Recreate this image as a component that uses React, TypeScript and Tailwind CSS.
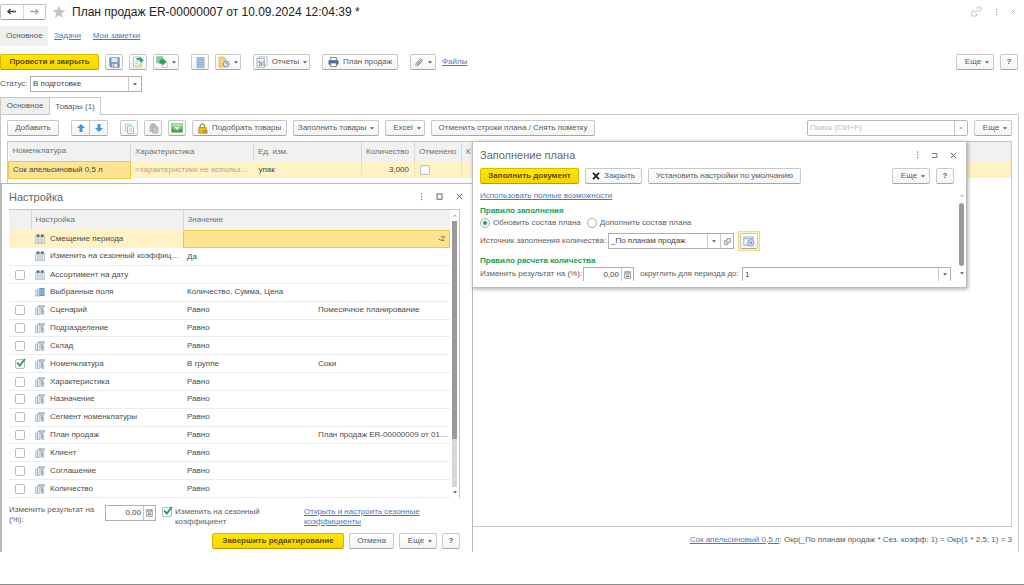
import React from "react";

const btn =
  "flex h-4 shrink-0 items-center justify-center gap-1 whitespace-nowrap rounded-[2px] border border-[#c8c8c8] border-b-[#a6a6a6] bg-linear-to-b from-white to-[#f4f4f4] text-[#5a5a5a]";
const primary =
  "flex h-4 shrink-0 items-center justify-center whitespace-nowrap rounded-[2px] border border-[#d9b800] border-b-[#b89c00] bg-linear-to-b from-[#ffe600] to-[#f7d400] font-bold text-[#5a4d10]";
const link = "text-[#4a78c8] underline";

function Caret() {
  return (
    <svg viewBox="0 0 4 3" className="h-[3px] w-1 shrink-0" aria-hidden="true">
      <path d="M0 0.3h4L2 2.6z" fill="#555" />
    </svg>
  );
}

function CaretUp() {
  return (
    <svg viewBox="0 0 4 3" className="h-[3px] w-1 shrink-0" aria-hidden="true">
      <path d="M0 2.6h4L2 0.3z" fill="#b5b5b5" />
    </svg>
  );
}

function Arrow({ right = false }: { right?: boolean }) {
  return (
    <svg viewBox="0 0 9 7" className="h-[7px] w-[9px]" aria-hidden="true">
      {right ? (
        <path d="M0 3.5h8M5.5 1L8 3.5 5.5 6" fill="none" stroke="#a8a8a8" strokeWidth="1.3" />
      ) : (
        <path d="M9 3.5H1M3.5 1L1 3.5 3.5 6" fill="none" stroke="#444" strokeWidth="1.5" />
      )}
    </svg>
  );
}

function Star() {
  return (
    <svg viewBox="0 0 14 14" className="size-3.5 shrink-0" aria-hidden="true">
      <path d="M7 .5l1.7 4.4 4.8.3-3.7 3 1.2 4.7L7 10.3l-4 2.6 1.2-4.7-3.7-3 4.8-.3z" fill="#c4c4c4" />
    </svg>
  );
}

function SaveIcon() {
  return (
    <svg viewBox="0 0 11 11" className="size-[11px]" aria-hidden="true">
      <path d="M.8.8h9.4v9.4H2L.8 9z" fill="#7e9fc6" stroke="#5f84b0" strokeWidth=".8" />
      <rect x="2.5" y="1" width="6" height="4" fill="#dce8f5" />
      <rect x="3" y="7" width="5.2" height="3" fill="#e9eff6" />
      <rect x="3.8" y="7.6" width="1.4" height="2" fill="#4f77a8" />
    </svg>
  );
}

function PostIcon() {
  return (
    <svg viewBox="0 0 12 12" className="size-3" aria-hidden="true">
      <path d="M1.5 1h5.500l2 2v8h-7.500z" fill="#fff" stroke="#9cb0c4" strokeWidth=".8" />
      <path d="M3 5.500h3M3 7.500h3M3 9.300h3" stroke="#a9bfd4" strokeWidth=".8" />
      <path d="M4.500 2h3V.3L11.700 4 9.800 6.200 7.500 5.700V4.200h-3z" fill="#27b05e" />
      <path d="M6.500 7.500h3.500v3.500H6.500z" fill="#efd76a" />
    </svg>
  );
}

function BasedOnIcon() {
  return (
    <svg viewBox="0 0 12 12" className="size-3" aria-hidden="true">
      <path d="M.8.8h6v6h-6z" fill="#8fd0a5" stroke="#6bb683" strokeWidth=".7" />
      <path d="M6 6h5v5.500H6z" fill="#fff" stroke="#9fb3c4" strokeWidth=".7" />
      <path d="M3.500 3.500h3V2l4 3.800-4 4.200V7.700h-3z" fill="#22a956" />
    </svg>
  );
}

function RegisterIcon() {
  return (
    <svg viewBox="0 0 9 11" className="h-[11px] w-[9px]" aria-hidden="true">
      <rect x="1" y=".5" width="7" height="10" fill="#a8c4e0" stroke="#8fadcb" strokeWidth=".8" />
      <path d="M1 3h7M1 5.500h7M1 8h7" stroke="#7fa2c6" strokeWidth=".6" />
    </svg>
  );
}

function TaskIcon() {
  return (
    <svg viewBox="0 0 12 12" className="size-3" aria-hidden="true">
      <path d="M1 1h5l2 2v8H1z" fill="#f4d27a" stroke="#d9b35a" strokeWidth=".8" />
      <circle cx="8.200" cy="8" r="2.900" fill="#e6eef7" stroke="#6688ad" strokeWidth=".9" />
      <path d="M8.200 6.300V8h1.500" fill="none" stroke="#44648a" strokeWidth=".8" />
    </svg>
  );
}

function ReportIcon() {
  return (
    <svg viewBox="0 0 12 12" className="size-3" aria-hidden="true">
      <path d="M3 .8h8v8.500H3z" fill="#fff" stroke="#9fb0c0" strokeWidth=".8" />
      <path d="M1 2.500h7.500v8.700H1z" fill="#f6f9fb" stroke="#8ea3b5" strokeWidth=".8" />
      <path d="M2.500 5l2 2" stroke="#d9604f" strokeWidth="1.200" />
      <path d="M3.500 10V7.500M5.200 10V6" stroke="#4fae6b" strokeWidth="1.100" />
      <path d="M7 10V4.500" stroke="#8aa8c8" strokeWidth="1" />
    </svg>
  );
}

function PrintIcon() {
  return (
    <svg viewBox="0 0 11 10" className="h-2.5 w-[11px]" aria-hidden="true">
      <rect x="2.700" y=".5" width="5.600" height="3.500" fill="#fff" stroke="#56748f" strokeWidth=".8" />
      <rect x=".5" y="3.300" width="10" height="4.400" rx="1" fill="#4a6f94" />
      <rect x="2.700" y="6" width="5.600" height="3.500" fill="#fff" stroke="#56748f" strokeWidth=".8" />
    </svg>
  );
}

function ClipIcon() {
  return (
    <svg viewBox="0 0 10 10" className="size-2.5" aria-hidden="true">
      <path
        d="M2.200 6.300L6 2.200c1-1.100 2.600.2 1.700 1.400L4.500 7.300c-.6.6-1.400 0-.9-.7L6.200 3.700M2.200 6.300c-1.300 1.600.7 3.200 2.100 1.900L8.500 3.700"
        fill="none"
        stroke="#777"
        strokeWidth=".9"
      />
    </svg>
  );
}

function BlueArrow({ down = false }: { down?: boolean }) {
  return (
    <svg viewBox="0 0 8 8" className="size-2" aria-hidden="true">
      <path d={down ? "M4 8L0 4h2.500V0h3v4H8z" : "M4 0l4 4H5.500v4h-3V4H0z"} fill="#3a9ad9" />
    </svg>
  );
}

function CopyIcon() {
  return (
    <svg viewBox="0 0 11 11" className="size-[11px]" aria-hidden="true">
      <path d="M1.500 1h4.500l1.500 1.500V8h-6z" fill="#eef6fb" stroke="#9cc3d8" strokeWidth=".8" />
      <path d="M3.500 3h4.500l1.500 1.500v6h-6z" fill="#eef6fb" stroke="#8ab8d2" strokeWidth=".8" />
      <path d="M5 6h3M5 8h3" stroke="#9cc3d8" strokeWidth=".7" />
    </svg>
  );
}

function PasteIcon() {
  return (
    <svg viewBox="0 0 11 11" className="size-[11px]" aria-hidden="true">
      <path d="M1.500 1.500h7v7.500h-7z" fill="#bcbcbc" />
      <path d="M3.500.6h3v1.600h-3z" fill="#9a9a9a" />
      <path d="M4.500 4h5.500v6H4.500z" fill="#c6c6c6" stroke="#a4a4a4" strokeWidth=".7" />
    </svg>
  );
}

function ImageIcon() {
  return (
    <svg viewBox="0 0 12 10" className="h-2.5 w-3" aria-hidden="true">
      <rect x=".5" y=".8" width="11" height="8.400" fill="#7cc47a" stroke="#7fbd80" strokeWidth=".8" />
      <rect x="1" y="1.300" width="10" height="2" fill="#bfe0bb" />
      <path d="M1 9V5l3 2.500h4L11 5v4z" fill="#3f9c50" />
      <path d="M3.500 4h5L6 7z" fill="#fff" />
    </svg>
  );
}

function PickIcon() {
  return (
    <svg viewBox="0 0 10 11" className="h-[11px] w-2.5" aria-hidden="true">
      <path d="M2.200 5V2.800C2.200.3 6.500.3 6.500 2.800V5" fill="none" stroke="#8aa33a" strokeWidth="1.300" />
      <path d="M.7 4.500h7.600v5.700H.7z" fill="#e8b820" stroke="#b98b12" strokeWidth=".7" />
      <path d="M5 7h4.500v3.500H5z" fill="#c8922a" />
    </svg>
  );
}

function LinkIcon() {
  return (
    <svg viewBox="0 0 11 11" className="size-[11px]" aria-hidden="true">
      <path
        d="M4.200 5H1.500a.8.800 0 00-.8.800v3.400c0 .5.300.8.800.8h3.400c.5 0 .8-.3.800-.8V7.500M6 3V1.800c0-.4.300-.8.800-.8h2.400c.5 0 .8.300.8.800v2.400c0 .5-.3.800-.8.800H8M4 7l3.500-3.500"
        fill="none"
        stroke="#a0a0a0"
        strokeWidth=".9"
      />
    </svg>
  );
}

function Dots() {
  return (
    <svg viewBox="0 0 3 8" className="h-2 w-[3px]" aria-hidden="true">
      <path d="M1 .5h1.200v1.200H1zM1 3.300h1.200v1.200H1zM1 6.100h1.200v1.200H1z" fill="#777" />
    </svg>
  );
}

function Square() {
  return (
    <svg viewBox="0 0 7 7" className="size-[7px]" aria-hidden="true">
      <rect x="1" y="1" width="5" height="5.200" fill="none" stroke="#666" strokeWidth="1" />
    </svg>
  );
}

function OpenSquare() {
  return (
    <svg viewBox="0 0 7 7" className="size-[7px]" aria-hidden="true">
      <path d="M1 1.500h5v4H1" fill="none" stroke="#777" strokeWidth="1" />
    </svg>
  );
}

function Cross({ className = "size-[7px] text-[#666]" }: { className?: string }) {
  return (
    <svg viewBox="0 0 7 7" className={className} aria-hidden="true">
      <path d="M.8.8l5.400 5.400M6.200.8L.8 6.200" stroke="currentColor" strokeWidth="1" />
    </svg>
  );
}

function CalcIcon() {
  return (
    <svg viewBox="0 0 7 8" className="h-2 w-[7px]" aria-hidden="true">
      <rect x=".8" y=".8" width="5.400" height="6.400" fill="#fff" stroke="#888" strokeWidth=".9" />
      <path d="M1 2h5M2 4h3M2 5.500h3" stroke="#777" strokeWidth=".9" />
    </svg>
  );
}

function ExternalIcon() {
  return (
    <svg viewBox="0 0 7 7" className="size-[7px]" aria-hidden="true">
      <path d="M2.800.8h3.500v3.500H2.800zM4 5.200v1.100H.7V2.700h1.200" fill="none" stroke="#777" strokeWidth=".8" />
    </svg>
  );
}

function GearIcon() {
  return (
    <svg viewBox="0 0 12 11" className="h-[11px] w-3" aria-hidden="true">
      <path d="M5 9.200H.8V1h9.400v2.500M.8 2.700h9.400" fill="none" stroke="#8ea6bf" strokeWidth=".9" />
      <circle cx="7.800" cy="6.800" r="3.200" fill="#dbe5ef" stroke="#7f9ab5" strokeWidth="1" />
      <circle cx="7.800" cy="6.800" r="1.300" fill="#7f9ab5" />
    </svg>
  );
}

type Kind = "param" | "fields" | "filter";

function RowIcon({ kind }: { kind: Kind }) {
  if (kind === "param")
    return (
      <svg viewBox="0 0 10 10" className="size-2.5 shrink-0" aria-hidden="true">
        <path d="M.6 2.500h2.200v7H.6zM3.900 2.500h2.200v7H3.900zM7.200 2.500h2.200v7H7.200z" fill="#eef3f7" stroke="#8ea0b0" strokeWidth=".6" />
        <path d="M1.500.6h3v2.200h-3zM5.800.6h3v2.200h-3z" fill="#5d6872" />
      </svg>
    );
  if (kind === "fields")
    return (
      <svg viewBox="0 0 11 10" className="size-2.5 shrink-0" aria-hidden="true">
        <path d="M.5 3h2.200v6.500H.5zM2.700 1.500h2v8h-2z" fill="#e3ecf4" stroke="#8aa4bc" strokeWidth=".6" />
        <rect x="4.700" y=".5" width="5.800" height="9" fill="#5f98c4" />
        <path d="M5 2.700h5.200M5 5h5.200M5 7.300h5.200" stroke="#d5e6f3" strokeWidth=".7" />
      </svg>
    );
  return (
    <svg viewBox="0 0 10 10" className="size-2.5 shrink-0" aria-hidden="true">
      <path d="M.5 3h2v6.500h-2zM2.500 1.200h2.300v8.300H2.500zM6.800 5h2v4.500h-2z" fill="#e6edf3" stroke="#94a6b6" strokeWidth=".6" />
      <path d="M4 .8h5.700L7.700 4v3.500L6.200 9V4z" fill="#c6d2dc" stroke="#7f93a5" strokeWidth=".7" />
    </svg>
  );
}

function Check({ label, checked = false }: { label: string; checked?: boolean }) {
  return (
    <span className="relative flex size-2.5 shrink-0">
      <input
        type="checkbox"
        aria-label={label}
        defaultChecked={checked}
        className="peer size-2.5 appearance-none rounded-[2px] border border-[#bcbcbc] bg-white"
      />
      <svg viewBox="0 0 11 10" className="pointer-events-none absolute -top-px left-0 hidden h-2.5 w-[11px] peer-checked:block" aria-hidden="true">
        <path d="M2 4.500l2.700 3L10 1" fill="none" stroke="#12a350" strokeWidth="1.800" />
      </svg>
    </span>
  );
}

function Radio({ label, checked = false }: { label: string; checked?: boolean }) {
  return (
    <label className="flex items-center gap-[3px]">
      <input
        type="radio"
        name="fill-mode"
        defaultChecked={checked}
        className="size-2.5 appearance-none rounded-full border border-[#a8a8a8] bg-white checked:bg-[radial-gradient(circle,#12a350_1px,white_3px)]"
      />
      {label}
    </label>
  );
}

function MoreButton() {
  return (
    <button type="button" className={btn + " w-[38px] pl-1"}>
      Еще <Caret />
    </button>
  );
}

function HelpButton() {
  return (
    <button type="button" className={btn + " w-[18px] font-bold"}>
      ?
    </button>
  );
}

function NumberField({ label, className }: { label: string; className: string }) {
  return (
    <span className={"flex shrink-0 border border-[#b0b0b0] bg-white " + className}>
      <input aria-label={label} defaultValue="0,00" className="w-0 flex-1 pr-0.5 text-right text-[#444]" />
      <button type="button" aria-label="Калькулятор" className="flex w-3 items-center justify-center border-l border-[#c8c8c8]">
        <CalcIcon />
      </button>
    </span>
  );
}

const rows: { kind: Kind; name: string; value: string; extra?: string; box?: boolean; on?: boolean }[] = [
  { kind: "param", name: "Изменить на сезонный коэффиц…", value: "Да" },
  { kind: "param", name: "Ассортимент на дату", value: "", box: true },
  { kind: "fields", name: "Выбранные поля", value: "Количество, Сумма, Цена" },
  { kind: "filter", name: "Сценарий", value: "Равно", extra: "Помесячное планирование", box: true },
  { kind: "filter", name: "Подразделение", value: "Равно", box: true },
  { kind: "filter", name: "Склад", value: "Равно", box: true },
  { kind: "filter", name: "Номенклатура", value: "В группе", extra: "Соки", box: true, on: true },
  { kind: "filter", name: "Характеристика", value: "Равно", box: true },
  { kind: "filter", name: "Назначение", value: "Равно", box: true },
  { kind: "filter", name: "Сегмент номенклатуры", value: "Равно", box: true },
  { kind: "filter", name: "План продаж", value: "Равно", extra: "План продаж ER-00000009 от 01…", box: true },
  { kind: "filter", name: "Клиент", value: "Равно", box: true },
  { kind: "filter", name: "Соглашение", value: "Равно", box: true },
  { kind: "filter", name: "Количество", value: "Равно", box: true },
];

function NameCell({ kind, name }: { kind: Kind; name: string }) {
  return (
    <td className="p-0 pl-1">
      <div className="flex items-center gap-[5px] whitespace-nowrap">
        <RowIcon kind={kind} />
        <span>{name}</span>
      </div>
    </td>
  );
}

function SettingsDialog() {
  return (
    <section
      aria-label="Настройка"
      className="absolute top-[183px] bottom-8 left-0 flex w-[473px] flex-col border-t border-r border-l-2 border-[#b8b8b8] bg-white pr-3 pl-[7px]"
    >
      <header className="flex h-[25px] shrink-0 items-center justify-between">
        <h2 className="text-[11px] text-[#666]">Настройка</h2>
        <div className="-mr-[3px] flex items-center gap-[13px]">
          <button type="button" aria-label="Меню"><Dots /></button>
          <button type="button" aria-label="Развернуть"><Square /></button>
          <button type="button" aria-label="Закрыть"><Cross /></button>
        </div>
      </header>
      <div className="flex shrink-0 border-t border-r border-[#c4c4c4]">
        <table className="h-[288px] w-0 flex-1 table-fixed border-collapse text-[#4c4c4c]">
          <colgroup>
            <col className="w-[22px]" />
            <col className="w-[152px]" />
            <col className="w-[131px]" />
            <col />
          </colgroup>
          <thead>
            <tr className="h-5 bg-[#f1f1f1] text-left text-[#707070]">
              <td className="p-0" />
              <th className="border-l border-[#d8d8d8] p-0 pl-1 font-normal">Настройка</th>
              <th colSpan={2} className="border-l border-[#d8d8d8] p-0 pl-1 font-normal">Значение</th>
            </tr>
          </thead>
          <tbody>
            <tr className="bg-[#fff2c4]">
              <td className="p-0" />
              <NameCell kind="param" name="Смещение периода" />
              <td colSpan={2} className="border border-[#ecc94b] bg-[#fee391] p-0 pr-1 text-right">-2</td>
            </tr>
            {rows.map((r) => (
              <tr key={r.name} className="border-b border-[#ececec]">
                <td className="p-0 pl-1.5">{r.box && <Check label={r.name} checked={r.on} />}</td>
                <NameCell kind={r.kind} name={r.name} />
                <td className="p-0 pl-1 whitespace-nowrap">{r.value}</td>
                <td className="p-0 pl-1 whitespace-nowrap">{r.extra}</td>
              </tr>
            ))}
          </tbody>
        </table>
        <div className="flex w-[9px] flex-col items-center gap-1 py-1">
          <CaretUp />
          <div className="w-[5px] flex-1 bg-[#d8d8d8]">
            <div className="h-[82%] bg-[#9a9a9a]" />
          </div>
          <Caret />
        </div>
      </div>
      <div className="mt-[7px] flex items-start leading-[10px] text-[#606060]">
        <span className="w-24 shrink-0 pr-2">Изменить результат на (%):</span>
        <NumberField label="Изменить результат на (%)" className="h-4 w-[51px]" />
        <label className="ml-[6px] flex w-[142px] items-start gap-[3px] pt-0.5">
          <Check label="Изменить на сезонный коэффициент" checked />
          <span className="w-24">Изменить на сезонный коэффициент</span>
        </label>
        <a href="#coefficients" className={link + " w-[130px] pt-0.5"}>
          Открыть и настроить сезонные коэффициенты
        </a>
      </div>
      <footer className="mt-auto mb-[3px] flex justify-end gap-[5px]">
        <button type="button" className={primary + " w-[132px]"}>Завершить редактирование</button>
        <button type="button" className={btn + " w-[45px]"}>Отмена</button>
        <MoreButton />
        <HelpButton />
      </footer>
    </section>
  );
}

function FillDialog() {
  return (
    <section
      aria-label="Заполнение плана"
      className="absolute top-[141px] left-[472px] flex w-[495px] flex-col border border-[#bdbdbd] bg-white pb-1.5 pl-[7px] text-[#606060] shadow-[1px_1px_4px_rgba(0,0,0,0.35)]"
    >
      <header className="flex h-[26px] items-center justify-between pr-[9px]">
        <h2 className="text-[11px] text-[#666]">Заполнение плана</h2>
        <div className="flex items-center gap-3">
          <button type="button" aria-label="Меню"><Dots /></button>
          <button type="button" aria-label="Развернуть"><OpenSquare /></button>
          <button type="button" aria-label="Закрыть окно"><Cross /></button>
        </div>
      </header>
      <div className="flex gap-[6px] pr-3">
        <button type="button" className={primary + " w-[99px]"}>Заполнить документ</button>
        <button type="button" className={btn + " w-[57px]"}>
          <svg viewBox="0 0 8 8" className="size-2" aria-hidden="true">
            <path d="M1 .8l6 6.400M7 .8L1 7.200" stroke="#222" strokeWidth="1.800" />
          </svg>
          Закрыть
        </button>
        <button type="button" className={btn + " w-[153px]"}>Установить настройки по умолчанию</button>
        <span className="flex-1" />
        <MoreButton />
        <HelpButton />
      </div>
      <div className="mt-[6px] flex">
        <div className="flex flex-1 flex-col pr-1.5">
          <a href="#full" className={link + " self-start leading-[12px]"}>Использовать полные возможности</a>
          <h3 className="mt-1 leading-[10px] font-bold text-[#12a350]">Правило заполнения</h3>
          <div className="mt-px flex gap-1.5 leading-[12px]">
            <Radio label="Обновить состав плана" checked />
            <Radio label="Дополнить состав плана" />
          </div>
          <div className="mt-px flex h-[22px] items-center">
            <label htmlFor="source" className="w-32 whitespace-nowrap">Источник заполнения количества:</label>
            <span className="flex h-4 w-[126px] border border-[#b0b0b0]">
              <input id="source" defaultValue="_По планам продаж" className="w-0 flex-1 pl-0.5 text-[#444]" />
              <button type="button" aria-label="Выбрать" className="flex w-[13px] items-center justify-center border-l border-[#c8c8c8]"><Caret /></button>
              <button type="button" aria-label="Открыть" className="flex w-[13px] items-center justify-center border-l border-[#c8c8c8]"><ExternalIcon /></button>
            </span>
            <span className="ml-1 flex border border-[#f0dc78] bg-[#fdf3b8] p-px">
              <button type="button" aria-label="Настроить источник" className={btn + " w-[18px] border-[#a9b8cc]"}><GearIcon /></button>
            </span>
          </div>
          <h3 className="mt-1 leading-[10px] font-bold text-[#12a350]">Правило расчета количества</h3>
          <div className="mt-px flex items-center">
            <span className="w-[103px] whitespace-nowrap">Изменить результат на (%):</span>
            <NumberField label="Изменить результат на (%)" className="h-[14px] w-[51px] border-b-0" />
            <label htmlFor="round" className="ml-[6px] w-[102px] whitespace-nowrap">округлить для периода до:</label>
            <span className="flex h-[14px] flex-1 border border-b-0 border-[#b0b0b0]">
              <input id="round" defaultValue="1" className="w-0 flex-1 pl-0.5 text-[#444]" />
              <button type="button" aria-label="Выбрать точность" className="flex w-3 items-center justify-center border-l border-[#c8c8c8]"><Caret /></button>
            </span>
          </div>
        </div>
        <div className="flex w-[9px] flex-col items-center gap-[6px] pt-1 pb-1.5">
          <CaretUp />
          <div className="w-[5px] flex-1 rounded-full bg-[#9a9a9a]" />
          <Caret />
        </div>
      </div>
    </section>
  );
}

export default function App() {
  return (
    <div className="relative flex min-h-screen flex-col border-b border-[#8c8c8c] bg-white pb-8 font-['Liberation_Sans',Arial,sans-serif] text-[8px] leading-[10px] text-[#5a5a5a]">
      <header className="flex h-[23px] items-center pr-2">
        <div className="flex h-4 w-[46px] rounded-[2px] border border-[#c4c4c4] border-b-[#a0a0a0]">
          <button type="button" aria-label="Назад" className="flex flex-1 items-center justify-center"><Arrow /></button>
          <button type="button" aria-label="Вперед" className="flex flex-1 items-center justify-center border-l border-[#d8d8d8]"><Arrow right /></button>
        </div>
        <button type="button" aria-label="В избранное" className="ml-1.5"><Star /></button>
        <h1 className="ml-1.5 flex-1 text-[12px] text-[#222]">План продаж ER-00000007 от 10.09.2024 12:04:39 *</h1>
        <div className="flex items-center gap-[13px] opacity-70">
          <button type="button" aria-label="Ссылка"><LinkIcon /></button>
          <button type="button" aria-label="Меню формы"><Dots /></button>
          <button type="button" aria-label="Закрыть форму"><Cross className="size-[5px] text-[#888]" /></button>
        </div>
      </header>
      <nav className="mt-[3px] flex h-5 items-center gap-3">
        <span className="flex h-full w-12 items-center bg-[#f0f0f0] pl-1.5">Основное</span>
        <a href="#tasks" className={link + " -ml-1.5"}>Задачи</a>
        <a href="#notes" className={link}>Мои заметки</a>
      </nav>
      <div className="mt-2 flex items-center gap-[6px] pr-1.5">
        <button type="button" className={primary + " w-[99px]"}>Провести и закрыть</button>
        <button type="button" aria-label="Записать" className={btn + " w-[18px]"}><SaveIcon /></button>
        <button type="button" aria-label="Провести" className={btn + " w-[18px]"}><PostIcon /></button>
        <button type="button" aria-label="Создать на основании" className={btn + " w-[26px]"}><BasedOnIcon /><Caret /></button>
        <button type="button" aria-label="Движения" className={btn + " ml-1.5 w-[18px]"}><RegisterIcon /></button>
        <button type="button" aria-label="Задания" className={btn + " w-[26px]"}><TaskIcon /><Caret /></button>
        <button type="button" className={btn + " ml-1.5 w-[57px]"}><ReportIcon />Отчеты <Caret /></button>
        <button type="button" className={btn + " ml-1.5 w-[76px]"}><PrintIcon />План продаж</button>
        <button type="button" aria-label="Вложения" className={btn + " ml-1.5 w-[26px]"}><ClipIcon /><Caret /></button>
        <a href="#files" className={link}>Файлы</a>
        <span className="flex-1" />
        <MoreButton />
        <HelpButton />
      </div>
      <div className="mt-[6px] flex h-4 items-center">
        <label htmlFor="status" className="w-[30px]">Статус:</label>
        <span className="relative flex h-4 w-28 border border-[#b0b0b0]">
          <select id="status" className="w-full appearance-none pl-0.5 text-[#444]">
            <option>В подготовке</option>
          </select>
          <span className="pointer-events-none absolute inset-y-0 right-0 flex w-[13px] items-center justify-center border-l border-[#c8c8c8]"><Caret /></span>
        </span>
      </div>
      <div role="tablist" className="relative z-0 mt-[5px] -mb-px flex h-[18px]">
        <button type="button" role="tab" aria-selected="false" className="w-[50px] border border-[#c8c8c8] bg-[#efefef]">Основное</button>
        <button type="button" role="tab" aria-selected="true" className="-ml-px w-[52px] border border-b-0 border-[#c8c8c8] bg-white">Товары (1)</button>
      </div>
      <main className="mr-[5px] flex flex-1 flex-col border border-b-0 border-[#c8c8c8] px-1.5 pt-[5px]">
        <div className="flex items-center gap-[6px]">
          <button type="button" className={btn + " w-[52px]"}>Добавить</button>
          <div className="ml-1.5 flex">
            <button type="button" aria-label="Вверх" className={btn + " w-[19px] rounded-r-none"}><BlueArrow /></button>
            <button type="button" aria-label="Вниз" className={btn + " -ml-px w-[19px] rounded-l-none"}><BlueArrow down /></button>
          </div>
          <button type="button" aria-label="Копировать" className={btn + " ml-1.5 w-[18px]"}><CopyIcon /></button>
          <button type="button" aria-label="Вставить" className={btn + " w-[18px]"}><PasteIcon /></button>
          <button type="button" aria-label="Изображение" className={btn + " w-[18px]"}><ImageIcon /></button>
          <button type="button" className={btn + " w-[95px]"}><PickIcon />Подобрать товары</button>
          <button type="button" className={btn + " w-[86px]"}>Заполнить товары <Caret /></button>
          <button type="button" className={btn + " w-[40px] pl-1"}>Excel <Caret /></button>
          <button type="button" className={btn + " w-[164px]"}>Отменить строки плана / Снять пометку</button>
          <span className="flex-1" />
          <span className="flex h-4 w-[161px] rounded-[2px] border border-[#b8b8b8]">
            <input aria-label="Поиск" placeholder="Поиск (Ctrl+F)" className="w-0 flex-1 pl-0.5 placeholder:text-[#b8b8b8]" />
            <button type="button" aria-label="Очистить" className="flex w-[13px] items-center justify-center border-l border-[#c8c8c8]"><Cross className="size-1 text-[#888]" /></button>
          </span>
          <MoreButton />
        </div>
        <div className="mt-[5px] flex-1 border border-[#c8c8c8]">
          <table className="w-full table-fixed border-collapse text-[#444]">
            <colgroup>
              <col className="w-[122px]" />
              <col className="w-[123px]" />
              <col className="w-[108px]" />
              <col className="w-[53px]" />
              <col className="w-[47px]" />
              <col />
            </colgroup>
            <thead>
              <tr className="h-[19px] bg-[#f1f1f1] text-left text-[#707070]">
                <th className="p-0 pl-1 font-normal">Номенклатура</th>
                <th className="border-l border-[#d8d8d8] p-0 pl-1 font-normal">Характеристика</th>
                <th className="border-l border-[#d8d8d8] p-0 pl-1 font-normal">Ед. изм.</th>
                <th className="border-l border-[#d8d8d8] p-0 pl-1 font-normal">Количество</th>
                <th className="border-l border-[#d8d8d8] p-0 pl-1 font-normal">Отменено</th>
                <th className="border-l border-[#d8d8d8] p-0 pl-1 font-normal">К</th>
              </tr>
            </thead>
            <tbody>
              <tr className="h-[17px] bg-[#fff2c4]">
                <td className="border border-[#ecc94b] bg-[#fee391] p-0 pl-1">Сок апельсиновый 0,5 л</td>
                <td className="p-0 pl-1 whitespace-nowrap text-[#b5a984]">&lt;характеристики не использ…</td>
                <td className="p-0 pl-[5px]">упак</td>
                <td className="border-l border-[#f0e2b0] p-0 pr-[5px] text-right">3,000</td>
                <td className="border-l border-[#f0e2b0] p-0 pl-[5px]"><Check label="Отменено" /></td>
                <td className="border-l border-[#f0e2b0] p-0" />
              </tr>
            </tbody>
          </table>
        </div>
        <p className="flex h-[25px] items-center justify-end whitespace-pre">
          <a href="#item" className={link}>Сок апельсиновый 0,5 л</a>: Окр(_По планам продаж * Сез. коэфф; 1) = Окр(1 * 2,5; 1) = 3
        </p>
      </main>
      <SettingsDialog />
      <FillDialog />
    </div>
  );
}
